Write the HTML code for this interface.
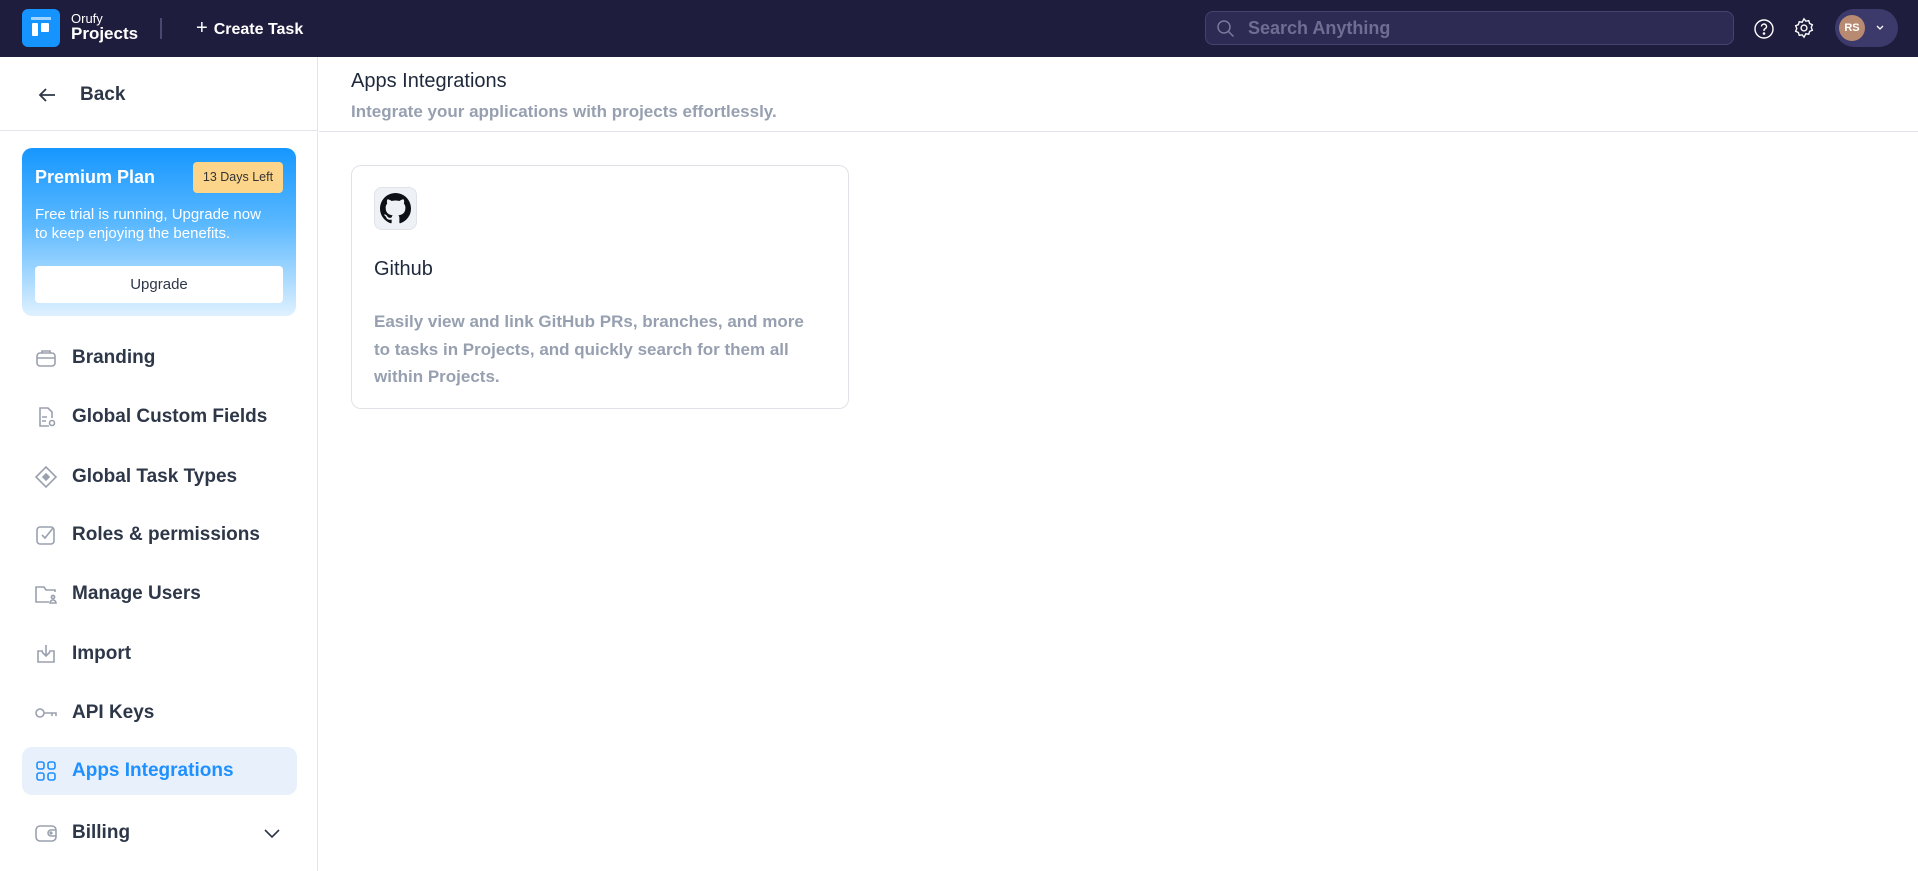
<!DOCTYPE html>
<html><head><meta charset="utf-8"><style>
*{box-sizing:border-box;margin:0;padding:0}
body{width:1918px;height:871px;overflow:hidden;background:#fff;font-family:"Liberation Sans",sans-serif;color:#1e293b;position:relative}
.top{position:absolute;left:0;top:0;width:1918px;height:57px;background:#1f1d3d}
.abs{position:absolute}
.side{position:absolute;left:0;top:57px;width:318px;height:814px;border-right:1px solid #e2e4ea}
.item{position:absolute;left:22px;width:275px;height:48px;display:flex;align-items:center;padding-left:12px;font-size:19px;font-weight:bold;color:#2d3748}
.item svg{width:24px;height:24px;margin-right:14px;fill:none;stroke:#9aa1ae;stroke-width:1.6}
.item.act{background:#e8f0fc;border-radius:10px;color:#1e90ff}
.item.act svg{stroke:#1e90ff}
</style></head><body>
<div class="top">
 <div class="abs" style="left:22px;top:9px;width:38px;height:38px;background:#1593ff;border-radius:6px">
  <div class="abs" style="left:9px;top:8px;width:20px;height:3px;background:#fff;opacity:.6"></div>
  <div class="abs" style="left:10px;top:14px;width:6px;height:13px;background:#fff;border-radius:1px"></div>
  <div class="abs" style="left:19px;top:14px;width:8px;height:9px;background:#fff;border-radius:1px"></div>
 </div>
 <div class="abs" style="left:71px;top:12px;color:#fff;font-size:13px;line-height:14px">Orufy</div>
 <div class="abs" style="left:71px;top:25px;color:#fff;font-size:17px;line-height:18px;font-weight:bold">Projects</div>
 <div class="abs" style="left:160px;top:18px;width:2px;height:21px;background:#4a4870"></div>
 <div class="abs" style="left:196px;top:17px;color:#fff;font-size:16px;font-weight:bold;line-height:22px"><span style="font-weight:normal;font-size:20px;margin-right:6px">+</span>Create Task</div>
 <div class="abs" style="left:1205px;top:11px;width:529px;height:34px;background:#2d2a54;border:1px solid #45436d;border-radius:8px">
  <svg class="abs" style="left:10px;top:7px" width="20" height="20" viewBox="0 0 20 20" fill="none" stroke="#7a789c" stroke-width="1.5"><circle cx="8" cy="8" r="6"/><path d="M12.5 12.5l5 5"/></svg>
  <div class="abs" style="left:42px;top:6px;font-size:18px;font-weight:bold;color:#6f6d92">Search Anything</div>
 </div>
 <svg class="abs" style="left:1753px;top:18px" width="22" height="22" viewBox="0 0 22 22" fill="none" stroke="#fff" stroke-width="1.4"><circle cx="11" cy="11" r="9"/><path d="M8.5 8.5a2.5 2.5 0 1 1 3.5 2.3c-.7.3-1 .8-1 1.5v.7"/><circle cx="11" cy="15.5" r=".6" fill="#fff"/></svg>
 <svg class="abs" style="left:1793px;top:17px" width="22" height="22" viewBox="0 0 24 24" fill="none" stroke="#fff" stroke-width="1.5"><circle cx="12" cy="12" r="3.2"/><path d="M12 2l2 2.5 3.2-.5.9 3.1 3 1.3-1.2 3 1.2 3-3 1.3-.9 3.1-3.2-.5L12 22l-2-2.5-3.2.5-.9-3.1-3-1.3 1.2-3-1.2-3 3-1.3.9-3.1 3.2.5z"/></svg>
 <div class="abs" style="left:1835px;top:9px;width:63px;height:38px;background:#3c3a6a;border-radius:19px">
  <div class="abs" style="left:4px;top:6px;width:26px;height:26px;border-radius:50%;background:#b98a72;color:#fff;font-size:11px;font-weight:bold;text-align:center;line-height:26px">RS</div>
  <svg class="abs" style="left:40px;top:15px" width="10" height="8" viewBox="0 0 10 8" fill="none" stroke="#fff" stroke-width="1.3"><path d="M2 2l3 3 3-3"/></svg>
 </div>
</div>

<div class="side">
 <svg class="abs" style="left:37px;top:28px" width="20" height="20" viewBox="0 0 20 20" fill="none" stroke="#2d3748" stroke-width="1.8"><path d="M18 10H3M9 4l-6 6 6 6"/></svg>
 <div class="abs" style="left:80px;top:27px;font-size:19px;font-weight:bold;color:#2d3748">Back</div>
 <div class="abs" style="left:0;top:73px;width:318px;height:1px;background:#e2e4ea"></div>
 <div class="abs" style="left:22px;top:91px;width:274px;height:168px;border-radius:10px;background:linear-gradient(#1697ff,#5ab8ff 45%,#dff1ff)">
  <div class="abs" style="left:13px;top:19px;color:#fff;font-size:18px;font-weight:bold">Premium Plan</div>
  <div class="abs" style="left:171px;top:14px;width:90px;height:31px;background:#fdd58a;border-radius:4px;font-size:12.5px;color:#333;text-align:center;line-height:31px">13 Days Left</div>
  <div class="abs" style="left:13px;top:57px;color:#fff;font-size:15px;line-height:19px">Free trial is running, Upgrade now<br>to keep enjoying the benefits.</div>
  <div class="abs" style="left:13px;top:118px;width:248px;height:37px;background:#fff;border-radius:4px;text-align:center;line-height:37px;font-size:15px;color:#2d3748">Upgrade</div>
 </div>
 <div class="item" style="top:277px"><svg viewBox="0 0 24 24"><rect x="3" y="7" width="18" height="13" rx="3"/><path d="M8 7V5h8v2M3 12h18"/></svg>Branding</div>
 <div class="item" style="top:336px"><svg viewBox="0 0 24 24"><path d="M15 21H6V3h8l4 4v6M8 12h5M8 16h4"/><circle cx="18" cy="18" r="2.5"/></svg>Global Custom Fields</div>
 <div class="item" style="top:396px"><svg viewBox="0 0 24 24"><path d="M12 2l10 10-10 10L2 12z"/><path d="M12 9l3 3-3 3-3-3z" fill="#9aa1ae"/></svg>Global Task Types</div>
 <div class="item" style="top:454px"><svg viewBox="0 0 24 24"><rect x="3" y="4" width="17" height="17" rx="3"/><path d="M8 12l3 3 8-10"/></svg>Roles &amp; permissions</div>
 <div class="item" style="top:513px"><svg viewBox="0 0 24 24"><path d="M21 10V8h-9l-2-3H2v15h13"/><circle cx="19" cy="15" r="1.6"/><path d="M16 21a3 3 0 0 1 6 0z"/></svg>Manage Users</div>
 <div class="item" style="top:573px"><svg viewBox="0 0 24 24"><path d="M9 9H4v11h16V9h-5M12 3v11M8 10l4 4 4-4"/></svg>Import</div>
 <div class="item" style="top:632px"><svg viewBox="0 0 24 24"><circle cx="6" cy="12" r="4"/><path d="M10 12h12v3M18 12v3"/></svg>API Keys</div>
 <div class="item act" style="top:690px"><svg viewBox="0 0 24 24"><rect x="3" y="3" width="7" height="7" rx="2"/><rect x="14" y="3" width="7" height="7" rx="2"/><rect x="3" y="14" width="7" height="7" rx="2"/><rect x="14" y="14" width="7" height="7" rx="2"/></svg>Apps Integrations</div>
 <div class="item" style="top:752px"><svg viewBox="0 0 24 24"><rect x="2" y="5" width="20" height="15" rx="4"/><path d="M22 9h-5a3 3 0 0 0 0 6h5"/><circle cx="17" cy="12" r=".8"/></svg>Billing
  <svg style="position:absolute;left:240px;width:20px;height:20px;stroke:#2d3748" viewBox="0 0 20 20"><path d="M3 7l7 7 7-7"/></svg></div>
</div>

<div class="abs" style="left:351px;top:70px;font-size:20px;color:#1e293b">Apps Integrations</div>
<div class="abs" style="left:351px;top:102px;font-size:17px;color:#97a0b0;font-weight:bold">Integrate your applications with projects effortlessly.</div>
<div class="abs" style="left:319px;top:131px;width:1599px;height:1px;background:#e2e4ea"></div>
<div class="abs" style="left:351px;top:165px;width:498px;height:244px;border:1px solid #e0e2e7;border-radius:10px">
 <div class="abs" style="left:22px;top:21px;width:43px;height:43px;background:#eef1f5;border:1px solid #dfe3e8;border-radius:8px">
  <svg class="abs" style="left:5px;top:5px" width="31" height="31" viewBox="0 0 16 16"><path fill="#0d1117" d="M8 0C3.58 0 0 3.58 0 8c0 3.54 2.290 6.530 5.470 7.590.4.07.55-.17.55-.38 0-.19-.01-.82-.01-1.49-2.010.37-2.530-.49-2.690-.94-.09-.23-.48-.94-.82-1.13-.28-.15-.68-.52-.01-.53.63-.01 1.080.58 1.230.82.72 1.210 1.870.87 2.330.66.07-.52.28-.87.51-1.070-1.780-.2-3.640-.89-3.640-3.950 0-.87.31-1.590.82-2.150-.08-.2-.36-1.020.08-2.120 0 0 .67-.21 2.200.82.64-.18 1.320-.27 2-.27.68 0 1.360.09 2 .27 1.530-1.040 2.200-.82 2.200-.82.44 1.100.16 1.920.08 2.120.51.56.82 1.270.82 2.150 0 3.070-1.870 3.750-3.650 3.950.29.25.54.73.54 1.480 0 1.070-.01 1.930-.01 2.200 0 .21.15.46.55.38A8.013 8.013 0 0016 8c0-4.420-3.580-8-8-8z"/></svg>
 </div>
 <div class="abs" style="left:22px;top:92px;font-size:20px;color:#1e293b">Github</div>
 <div class="abs" style="left:22px;top:142px;font-size:17px;line-height:27.5px;color:#97a0b0;font-weight:bold;width:448px">Easily view and link GitHub PRs, branches, and more to tasks in Projects, and quickly search for them all within Projects.</div>
</div>
</body></html>
